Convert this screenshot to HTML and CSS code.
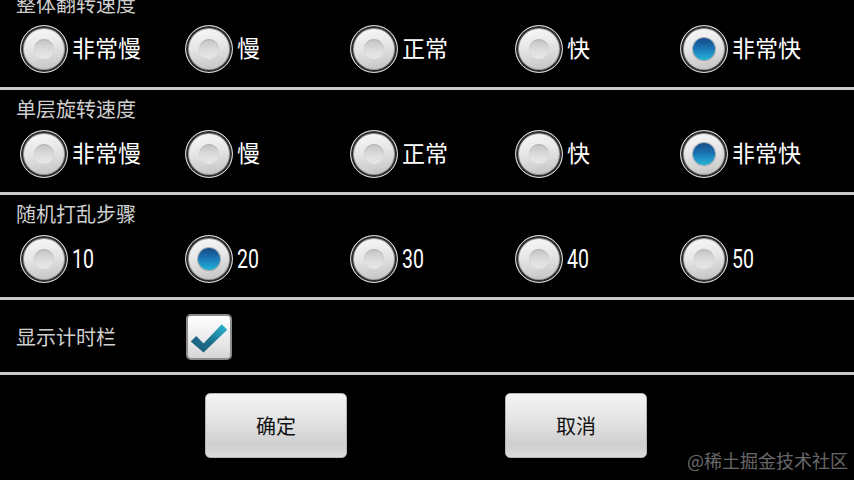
FILE: index.html
```html
<!DOCTYPE html>
<html lang="zh">
<head>
<meta charset="utf-8">
<title>设置</title>
<link rel="stylesheet" href="styles.css">
</head>
<body>
<div class="dialog">
  <div class="sections">
    <section class="group">
      <div class="title">整体翻转速度</div>
      <div class="options">
        <label class="opt"><span class="radio"></span><span class="txt">非常慢</span></label>
        <label class="opt"><span class="radio"></span><span class="txt">慢</span></label>
        <label class="opt"><span class="radio"></span><span class="txt">正常</span></label>
        <label class="opt"><span class="radio"></span><span class="txt">快</span></label>
        <label class="opt"><span class="radio checked"></span><span class="txt">非常快</span></label>
      </div>
    </section>
    <div class="divider"></div>
    <section class="group">
      <div class="title">单层旋转速度</div>
      <div class="options">
        <label class="opt"><span class="radio"></span><span class="txt">非常慢</span></label>
        <label class="opt"><span class="radio"></span><span class="txt">慢</span></label>
        <label class="opt"><span class="radio"></span><span class="txt">正常</span></label>
        <label class="opt"><span class="radio"></span><span class="txt">快</span></label>
        <label class="opt"><span class="radio checked"></span><span class="txt">非常快</span></label>
      </div>
    </section>
    <div class="divider"></div>
    <section class="group">
      <div class="title">随机打乱步骤</div>
      <div class="options">
        <label class="opt"><span class="radio"></span><span class="txt num">10</span></label>
        <label class="opt"><span class="radio checked"></span><span class="txt num">20</span></label>
        <label class="opt"><span class="radio"></span><span class="txt num">30</span></label>
        <label class="opt"><span class="radio"></span><span class="txt num">40</span></label>
        <label class="opt"><span class="radio"></span><span class="txt num">50</span></label>
      </div>
    </section>
    <div class="divider"></div>
    <section class="check-row">
      <div class="check-label">显示计时栏</div>
      <span class="checkbox">
        <svg viewBox="0 0 46 46" width="44" height="44">
          <defs>
            <linearGradient id="ck" x1="0" y1="1" x2="1" y2="0">
              <stop offset="0" stop-color="#1c5a78"/>
              <stop offset="0.45" stop-color="#1d6f8c"/>
              <stop offset="1" stop-color="#2bbad6"/>
            </linearGradient>
          </defs>
          <polygon points="3,28 9,22 17,30 37,9 43,15 17,40" fill="url(#ck)"/>
        </svg>
      </span>
    </section>
    <div class="divider"></div>
    <div class="buttons">
      <button class="btn">确定</button>
      <button class="btn">取消</button>
    </div>
  </div>
  <div class="watermark">@稀土掘金技术社区</div>
</div>
</body>
</html>
```
FILE: styles.css
```css
html, body {
  margin: 0;
  padding: 0;
  background: #000;
}
body {
  width: 854px;
  height: 480px;
  overflow: hidden;
  font-family: "Noto Sans CJK SC", "Noto Sans", sans-serif;
}
.dialog {
  position: relative;
  width: 854px;
  height: 480px;
  overflow: hidden;
}
.sections {
  margin-top: -15px;
  display: flex;
  flex-direction: column;
}
.group {
  display: flex;
  flex-direction: column;
  padding-bottom: 12px;
}
.title {
  height: 38px;
  line-height: 38px;
  padding-left: 16px;
  font-size: 20px;
  color: #cfcfcf;
}
.options {
  height: 52px;
  display: grid;
  grid-template-columns: repeat(5, 165px);
  padding-left: 20px;
  align-items: center;
}
.opt {
  display: flex;
  align-items: center;
  gap: 4px;
}
.txt {
  font-family: "Roboto", "Noto Sans CJK SC", sans-serif;
  font-size: 23px;
  color: #fff;
  line-height: 1;
}
.num {
  display: inline-block;
  font-size: 25px;
  transform: scaleX(0.78);
  transform-origin: left center;
}
.radio {
  position: relative;
  box-sizing: border-box;
  width: 48px;
  height: 48px;
  border-radius: 50%;
  border: 1.5px solid #d8d8d8;
  background: linear-gradient(170deg, #fbfbfb 0%, #e6e6e6 45%, #bdbdbd 100%);
  box-shadow: inset 0 0 0 2px #2b2b2b, inset 0 0 0 3px #9a9a9a;
  flex: none;
}
.radio::after {
  content: "";
  position: absolute;
  left: 50%;
  top: 50%;
  width: 20px;
  height: 20px;
  margin: -10px 0 0 -10px;
  border-radius: 50%;
  background: linear-gradient(#c4c4c4, #dedede 60%, #e8e8e8);
  box-shadow: inset 0 1px 1px rgba(0,0,0,0.12);
}
.radio.checked::after {
  width: 22px;
  height: 22px;
  margin: -11px 0 0 -11px;
  background: linear-gradient(#184a86 0%, #1a72b2 45%, #22b4d8 100%);
  box-shadow: 0 0 0 1px rgba(40,60,90,0.35);
}
.divider {
  height: 3px;
  background: #c9c9c9;
}
.check-row {
  height: 72px;
  box-sizing: border-box;
  padding-top: 14px;
  display: flex;
  align-items: flex-start;
}
.check-label {
  width: 186px;
  box-sizing: border-box;
  padding-left: 16px;
  height: 46px;
  line-height: 46px;
  font-size: 20px;
  color: #cfcfcf;
}
.checkbox {
  box-sizing: border-box;
  width: 46px;
  height: 46px;
  border: 2px solid #8c8c8c;
  border-radius: 5px;
  background: linear-gradient(#ffffff, #e9e9e9 60%, #d6d6d6);
  display: flex;
  align-items: center;
  justify-content: center;
}
.buttons {
  display: flex;
  padding-top: 18px;
  padding-left: 205px;
  gap: 158px;
}
.btn {
  width: 142px;
  height: 65px;
  border: 1px solid #b5b5b5;
  border-radius: 5px;
  background: linear-gradient(#f4f4f4 0%, #e2e2e2 45%, #cfcfcf 80%, #dcdcdc 100%);
  font-family: "Noto Sans CJK SC", sans-serif;
  font-size: 20px;
  color: #111;
  padding: 0;
}
.watermark {
  position: absolute;
  right: 6px;
  bottom: 7px;
  font-size: 18px;
  color: rgba(255,255,255,0.42);
  font-family: "Noto Sans CJK SC", sans-serif;
}
```
